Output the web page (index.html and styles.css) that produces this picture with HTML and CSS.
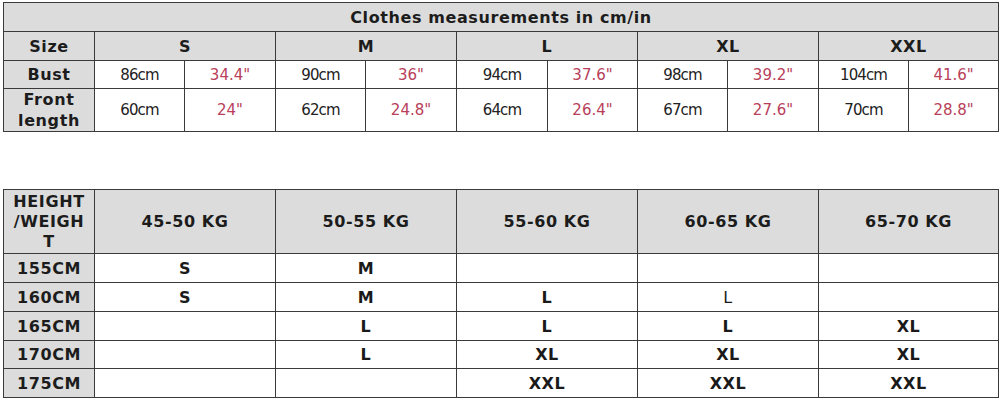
FILE: index.html
```html
<!DOCTYPE html>
<html>
<head>
<meta charset="utf-8">
<link rel="stylesheet" href="styles.css">
</head>
<body>
<div class="page">
<table class="chart measure">
  <colgroup>
    <col class="c-label"><col class="c90"><col class="c91"><col class="c90"><col class="c91"><col class="c91"><col class="c90"><col class="c90"><col class="c91"><col class="c90"><col class="c90">
  </colgroup>
  <tr class="r-title"><th class="head" colspan="11">Clothes measurements in cm/in</th></tr>
  <tr class="r-size">
    <th class="head">Size</th>
    <th class="head" colspan="2">S</th>
    <th class="head" colspan="2">M</th>
    <th class="head" colspan="2">L</th>
    <th class="head" colspan="2">XL</th>
    <th class="head" colspan="2">XXL</th>
  </tr>
  <tr class="r-bust">
    <th class="head">Bust</th>
    <td class="cm">86cm</td><td class="in">34.4"</td>
    <td class="cm">90cm</td><td class="in">36"</td>
    <td class="cm">94cm</td><td class="in">37.6"</td>
    <td class="cm">98cm</td><td class="in">39.2"</td>
    <td class="cm">104cm</td><td class="in">41.6"</td>
  </tr>
  <tr class="r-front">
    <th class="head">Front<br>length</th>
    <td class="cm">60cm</td><td class="in">24"</td>
    <td class="cm">62cm</td><td class="in">24.8"</td>
    <td class="cm">64cm</td><td class="in">26.4"</td>
    <td class="cm">67cm</td><td class="in">27.6"</td>
    <td class="cm">70cm</td><td class="in">28.8"</td>
  </tr>
</table>

<table class="chart fit">
  <colgroup>
    <col class="c-label"><col class="c181"><col class="c181"><col class="c181"><col class="c181"><col class="c180">
  </colgroup>
  <tr class="r-head">
    <th class="head hw">HEIGHT<br>/WEIGH<br>T</th>
    <th class="head">45-50 KG</th>
    <th class="head">50-55 KG</th>
    <th class="head">55-60 KG</th>
    <th class="head">60-65 KG</th>
    <th class="head">65-70 KG</th>
  </tr>
  <tr><th class="head">155CM</th><td class="sz">S</td><td class="sz">M</td><td></td><td></td><td></td></tr>
  <tr><th class="head">160CM</th><td class="sz">S</td><td class="sz">M</td><td class="sz">L</td><td class="sz light">L</td><td></td></tr>
  <tr><th class="head">165CM</th><td></td><td class="sz">L</td><td class="sz">L</td><td class="sz">L</td><td class="sz">XL</td></tr>
  <tr class="r-short"><th class="head">170CM</th><td></td><td class="sz">L</td><td class="sz">XL</td><td class="sz">XL</td><td class="sz">XL</td></tr>
  <tr><th class="head">175CM</th><td></td><td></td><td class="sz">XXL</td><td class="sz">XXL</td><td class="sz">XXL</td></tr>
</table>
</div>
</body>
</html>
```

FILE: styles.css
```css
html, body {
  margin: 0;
  padding: 0;
  background: #ffffff;
}

.page {
  padding: 2px 0 0 3px;
  font-family: "DejaVu Sans", Verdana, sans-serif;
  color: #1a1a1a;
}

.chart {
  border-collapse: collapse;
  table-layout: fixed;
  width: 995px;
  border: 1px solid #2a2a2a;
}

.chart th,
.chart td {
  border: 1px solid #3a3a3a;
  padding: 0;
  text-align: center;
  vertical-align: middle;
  overflow: hidden;
  white-space: nowrap;
}

.c-label { width: 91px; }
.c90 { width: 90px; }
.c91 { width: 91px; }
.c180 { width: 180px; }
.c181 { width: 181px; }

.head {
  background: #dcdcdc;
  font-weight: bold;
  font-size: 16px;
  letter-spacing: 0.6px;
  color: #1c1c1c;
}

.measure .r-title { height: 29px; }
.measure .r-size { height: 29px; }
.measure .r-bust { height: 28px; }
.measure .r-front { height: 43px; }

.measure .r-front .head {
  line-height: 21px;
}

.cm {
  font-size: 15px;
  letter-spacing: -0.9px;
  color: #222222;
}

.in {
  font-size: 15px;
  color: #b8405a;
}

.fit {
  margin-top: 57px;
}

.fit tr { height: 29px; }
.fit .r-head { height: 64px; }
.fit .r-short { height: 28px; }

.fit .hw {
  line-height: 20px;
}

.sz {
  font-weight: bold;
  font-size: 16px;
  letter-spacing: 0.6px;
  color: #1a1a1a;
}

.sz.light {
  font-weight: normal;
}
```
